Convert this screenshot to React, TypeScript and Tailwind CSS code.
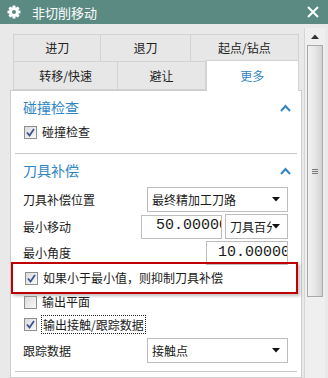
import React from "react";

const FONT = { fontFamily: '"Noto Sans CJK SC", "Noto Sans", sans-serif' };

function Gear() {
  const teeth = [0, 45, 90, 135];
  return (
    <svg width="14" height="14" viewBox="0 0 14 14">
      {teeth.map((a) => (
        <rect key={a} x="5.5" y="0.5" width="3" height="13" rx="0.6" fill="#fff" transform={`rotate(${a} 7 7)`} />
      ))}
      <circle cx="7" cy="7" r="4.8" fill="#fff" />
      <circle cx="7" cy="7" r="2" fill="#5b8a83" />
    </svg>
  );
}

function Chevron() {
  return (
    <svg width="11" height="8" viewBox="0 0 11 8">
      <path d="M1 7 L5.5 2 L10 7" stroke="#2f86c3" strokeWidth="2" fill="none" />
    </svg>
  );
}

function Arrow() {
  return (
    <svg width="8" height="5" viewBox="0 0 8 5">
      <path d="M0 0 H8 L4 4.5 Z" fill="#111" />
    </svg>
  );
}

function Check({ checked }: { checked: boolean }) {
  return (
    <div className="w-[13px] h-[13px] border border-[#8e8f8f] bg-gradient-to-br from-[#dcdcdc] to-[#f8f8f8] flex items-center justify-center shrink-0">
      {checked && (
        <svg width="9" height="9" viewBox="0 0 9 9">
          <path d="M1 4.5 L3.5 7.5 L8 1" stroke="#3b4f91" strokeWidth="1.7" fill="none" />
        </svg>
      )}
    </div>
  );
}

function Select({ text, w }: { text: string; w: string }) {
  return (
    <div className={`${w} h-[25px] border border-[#bdbdbd] bg-white flex items-center pl-[4px] pr-[7px] text-[12px] text-[#1a1a1a] overflow-hidden`}>
      <span className="flex-1 whitespace-nowrap overflow-hidden">{text}</span>
      <Arrow />
    </div>
  );
}

function NumBox({ value, w, pl }: { value: string; w: string; pl: string }) {
  return (
    <div className={`${w} h-[24px] border border-[#bdbdbd] bg-white flex items-center ${pl} overflow-hidden`}>
      <span className="whitespace-nowrap text-[15px] text-[#1a1a1a]" style={{ fontFamily: '"Liberation Mono", monospace' }}>
        {value}
      </span>
    </div>
  );
}

export default function App() {
  return (
    <div className="w-[328px] h-[378px] overflow-hidden bg-[#e9e9e9] flex flex-col" style={FONT}>
      {/* title bar */}
      <div className="h-[24px] bg-[#5b8a83] flex items-center pl-[7px] pr-[9px] shrink-0">
        <Gear />
        <span className="ml-[11px] text-white text-[13px] leading-none">非切削移动</span>
        <div className="flex-1" />
        <svg width="12" height="12" viewBox="0 0 12 12">
          <path d="M1 1 L11 11 M11 1 L1 11" stroke="#fff" strokeWidth="2" />
        </svg>
      </div>

      <div className="flex flex-1 min-h-0">
        {/* main column */}
        <div className="w-[292px] ml-[10px] flex flex-col">
          <div className="pt-[10px] px-[3px] text-[12px] text-[#222]">
            <div className="flex h-[28px]">
              <div className="w-[89px] border border-[#d3d3d3] bg-[#e7e7e7] flex items-center justify-center">进刀</div>
              <div className="w-[90px] border border-l-0 border-[#d3d3d3] bg-[#e7e7e7] flex items-center justify-center">退刀</div>
              <div className="w-[109px] border border-l-0 border-[#d3d3d3] bg-[#e7e7e7] flex items-center justify-center">起点/钻点</div>
            </div>
            <div className="flex h-[28px] items-start">
              <div className="w-[106px] h-[28px] border border-t-0 border-[#d3d3d3] bg-[#e7e7e7] flex items-center justify-center">转移/快速</div>
              <div className="w-[88px] h-[28px] border border-l-0 border-t-0 border-[#d3d3d3] bg-[#e7e7e7] flex items-center justify-center">避让</div>
              <div className="relative z-10 w-[94px] h-[31px] -mt-[2px] border border-b-0 border-[#d3d3d3] bg-white flex items-center justify-center text-[#2f86c3]">更多</div>
            </div>
          </div>

          <div className="flex-1 border border-[#cccccc] bg-white flex flex-col text-[12px] text-[#1a1a1a]">
            {/* section 1 */}
            <div className="h-[29px] mt-[2px] flex items-center pl-[12px] pr-[10px]">
              <span className="text-[14px] text-[#2f86c3] flex-1">碰撞检查</span>
              <Chevron />
            </div>
            <div className="h-[20px] flex items-center pl-[13px] gap-[5px]">
              <Check checked />
              <span>碰撞检查</span>
            </div>
            <div className="mt-[11px] mx-[4px] h-[1px] bg-[#c8c8c8]" />
            {/* section 2 */}
            <div className="h-[29px] mt-[2px] flex items-center pl-[12px] pr-[10px]">
              <span className="text-[14px] text-[#2f86c3] flex-1">刀具补偿</span>
              <Chevron />
            </div>
            <div className="flex items-center pl-[12px] mt-[2px]">
              <span className="flex-1">刀具补偿位置</span>
              <div className="mr-[13px]">
                <Select text="最终精加工刀路" w="w-[141px]" />
              </div>
            </div>
            <div className="flex items-center pl-[12px] mt-[2px]">
              <span className="flex-1">最小移动</span>
              <NumBox value="50.00000" w="w-[81px]" pl="pl-[14px]" />
              <div className="ml-[3px] mr-[13px]">
                <Select text="刀具百分比" w="w-[63px]" />
              </div>
            </div>
            <div className="flex items-center pl-[12px] mt-[2px]">
              <span className="flex-1">最小角度</span>
              <div className="mr-[13px]">
                <NumBox value="10.00000" w="w-[82px]" pl="pl-[11px]" />
              </div>
            </div>
            {/* annotated row */}
            <div className="-mt-[3px] h-[32px] w-[287px] border-2 border-[#c00000] flex items-center pl-[12px] gap-[5px] shadow-[2px_2px_3px_rgba(0,0,0,0.25)]">
              <Check checked />
              <span>如果小于最小值，则抑制刀具补偿</span>
            </div>
            <div className="h-[20px] -mt-[2px] flex items-center pl-[13px] gap-[5px]">
              <Check checked={false} />
              <span>输出平面</span>
            </div>
            <div className="h-[22px] mt-[1px] flex items-center pl-[13px] gap-[4px]">
              <Check checked />
              <span className="border border-dotted border-[#222] px-[1px] leading-[17px]">输出接触/跟踪数据</span>
            </div>
            <div className="flex items-center pl-[12px] mt-[3px]">
              <span className="flex-1">跟踪数据</span>
              <div className="mr-[13px]">
                <Select text="接触点" w="w-[141px]" />
              </div>
            </div>
            <div className="mt-[8px] mx-[4px] h-[1px] bg-[#c8c8c8]" />
          </div>
        </div>

        {/* scrollbar */}
        <div className="ml-[2px] mt-[4px] w-[21px] bg-[#efefef] border-l border-[#d6d6d6] flex flex-col items-center">
          <div className="h-[17px] w-[17px] flex items-center justify-center">
            <svg width="8" height="5" viewBox="0 0 8 5">
              <path d="M0 5 H8 L4 0.5 Z" fill="#333" />
            </svg>
          </div>
          <div className="w-[16px] h-[252px] border border-[#a9a9a9] bg-gradient-to-r from-[#f2f2f2] via-[#e6e6e6] to-[#d2d2d2] flex flex-col items-center justify-center gap-[1px]">
            <div className="w-[6px] h-[1px] bg-[#777]" />
            <div className="w-[6px] h-[1px] bg-[#777]" />
            <div className="w-[6px] h-[1px] bg-[#777]" />
          </div>
        </div>
      </div>
    </div>
  );
}
